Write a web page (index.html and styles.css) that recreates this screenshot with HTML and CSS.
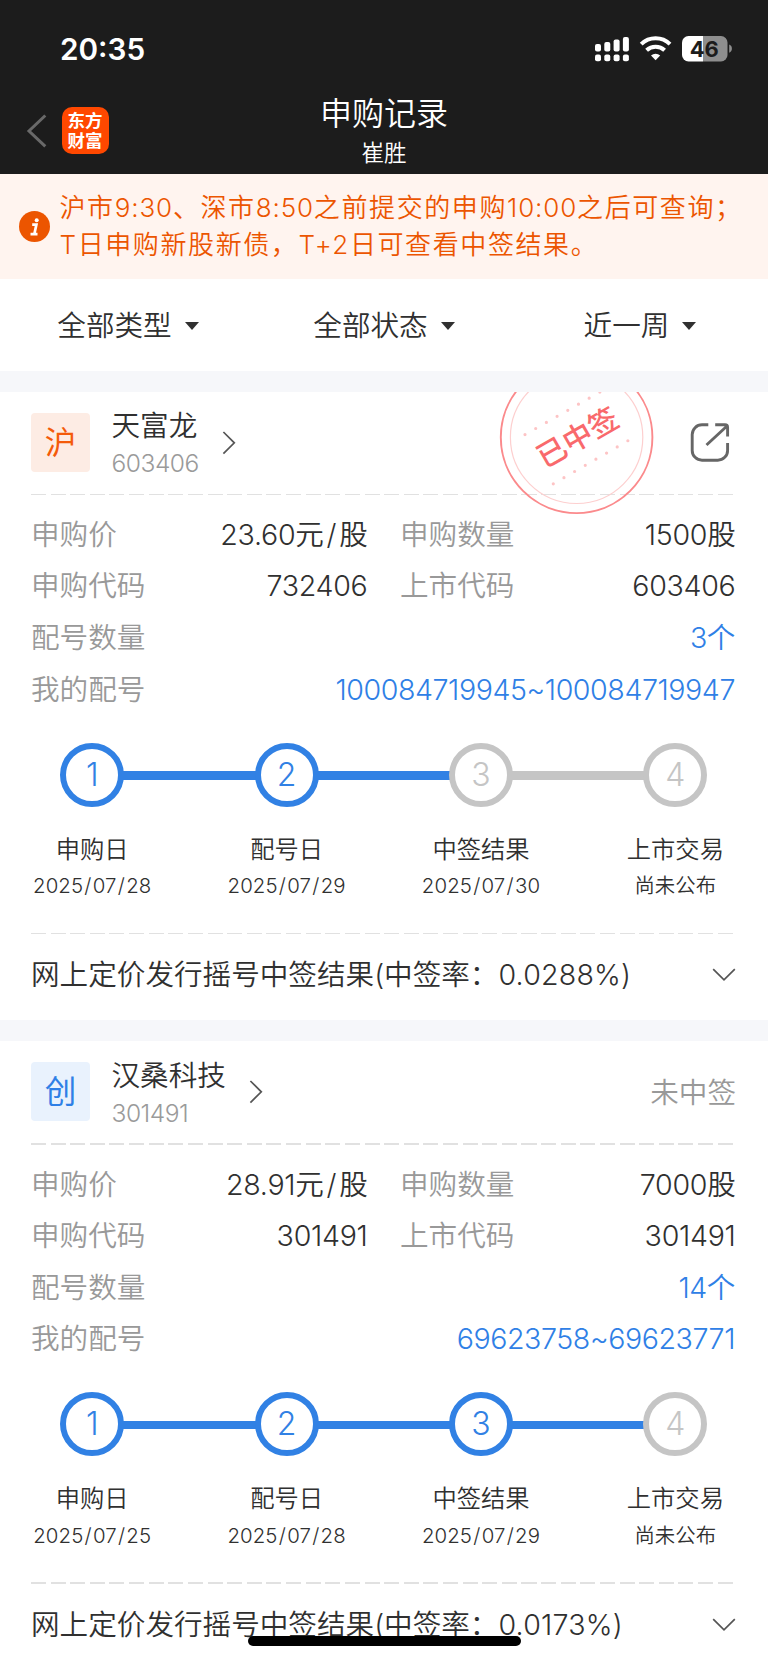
FILE: index.html
```html
<!DOCTYPE html>
<html lang="zh-CN">
<head>
<meta charset="utf-8">
<meta name="viewport" content="width=device-width">
<title>申购记录</title>
<link rel="stylesheet" href="styles.css">
</head>
<body>
<header class="header">
  <div class="status">
    <span class="time">20:35</span>
    <svg class="status-icons" width="140" height="30" viewBox="594 34 140 30">
      <g fill="#fff">
        <rect x="595" y="44" width="6" height="7.4" rx="2"/><rect x="604.3" y="42" width="6" height="9.4" rx="2"/><rect x="613.6" y="39.6" width="6" height="11.8" rx="2"/><rect x="622.9" y="37" width="6" height="14.4" rx="2"/>
        <rect x="595" y="54.6" width="6" height="6.6" rx="2"/><rect x="604.3" y="54.6" width="6" height="6.6" rx="2"/><rect x="613.6" y="54.6" width="6" height="6.6" rx="2"/><rect x="622.9" y="54.6" width="6" height="6.6" rx="2"/>
        <path d="M655.6 60.2l-4.6-4.6a6.6 6.6 0 0 1 9.2 0z"/>
      </g>
      <g fill="none" stroke="#fff" stroke-width="4">
        <path d="M641.2 44.2a20.5 20.5 0 0 1 28.8 0"/>
        <path d="M646.6 50.3a13 13 0 0 1 18 0"/>
      </g>
      <path d="M703 36h18a6.5 6.5 0 0 1 6.5 6.5V55a6.5 6.5 0 0 1-6.5 6.5h-18z" fill="#8e8e8e"/>
      <path d="M703 36h-14.5a6.5 6.5 0 0 0-6.5 6.5V55a6.5 6.5 0 0 0 6.5 6.5H703z" fill="#fff"/>
      <path d="M729.2 44.6c3.6 1.2 3.6 7 0 8.2z" fill="#8e8e8e"/>
      <text class="battery-text" x="704.3" y="56.8" text-anchor="middle">46</text>
    </svg>
  </div>
  <div class="nav">
    <div class="nav-left">
      <svg width="22" height="36" viewBox="26 113 22 36"><path d="M45.3 115.5L29 131l16.3 15.3" fill="none" stroke="#696969" stroke-width="3"/></svg>
      <div class="app-logo"><span>东方</span><span>财富</span></div>
    </div>
    <div class="nav-title"><h1>申购记录</h1><p>崔胜</p></div>
    <div class="nav-right"></div>
  </div>
</header>

<section class="notice">
  <svg width="31" height="31" viewBox="0 0 31 31"><circle cx="15.5" cy="15.5" r="15.5" fill="#ec5500"/><circle cx="17.7" cy="9.2" r="2" fill="#fff"/><path d="M13.2 13.6h4.2l-2 9.2M11.5 23.1h7" fill="none" stroke="#fff" stroke-width="2.7"/></svg>
  <p>沪市<em>9:30</em>、深市<em>8:50</em>之前提交的申购<em>10:00</em>之后可查询；<br>T日申购新股新债，T+2日可查看中签结果。</p>
</section>

<nav class="filters">
  <div class="filter">全部类型<i class="caret"></i></div>
  <div class="filter">全部状态<i class="caret"></i></div>
  <div class="filter">近一周<i class="caret"></i></div>
</nav>

<main>
<article class="card">
  <div class="card-head">
    <span class="badge badge-sh">沪</span>
    <div class="stock"><b>天富龙</b><span>603406</span></div>
    <svg class="arrow" width="14" height="26" viewBox="0 0 14 26"><path d="M1.4 2L12.3 12.8 1.4 23.6" fill="none" stroke="#555" stroke-width="1.7"/></svg>
    <svg class="share" width="42" height="42" viewBox="689 421 42 42"><g fill="none" stroke="#666" stroke-width="2.9"><path d="M709.3 424.8h-6.3a9.8 9.8 0 0 0-9.8 9.8v15.8a9.8 9.8 0 0 0 9.8 9.8h15.8a9.8 9.8 0 0 0 9.8-9.8v-7.4"/><path d="M716.2 424.8h9.8a2.6 2.6 0 0 1 2.6 2.6v9.2M707.5 445l20-18.5"/></g></svg>
    <svg class="stamp" width="156" height="124" viewBox="499 391 156 124">
      <circle cx="576.6" cy="436.3" r="75.8" fill="none" stroke="#fb8a8c" stroke-width="1.9"/>
      <circle cx="576.6" cy="436.3" r="66.2" fill="none" stroke="#fdcfcf" stroke-width="1.2"/>
      <g fill="none" stroke="#fdc4c5" stroke-width="3.2" stroke-linecap="round" stroke-dasharray="0 12.3">
        <path d="M525 433.6L600.5 390.7"/><path d="M553.3 482.8L628.8 439.2"/>
      </g>
      <text class="stamp-text" x="577.6" y="447" text-anchor="middle" transform="rotate(-30 577.6 436.3)">已中签</text>
    </svg>
  </div>
  <div class="dash"></div>
  <dl class="details">
    <div><dt>申购价</dt><dd>23.60元<s>/</s>股</dd></div>
    <div><dt>申购数量</dt><dd>1500股</dd></div>
    <div><dt>申购代码</dt><dd>732406</dd></div>
    <div><dt>上市代码</dt><dd>603406</dd></div>
    <div class="wide"><dt>配号数量</dt><dd class="link">3个</dd></div>
    <div class="wide"><dt>我的配号</dt><dd class="link">100084719945~100084719947</dd></div>
  </dl>
  <ol class="steps">
    <li class="on next-on"><i>1</i><b>申购日</b><span>2025<s>/</s>07<s>/</s>28</span></li>
    <li class="on next-on"><i>2</i><b>配号日</b><span>2025<s>/</s>07<s>/</s>29</span></li>
    <li><i>3</i><b>中签结果</b><span>2025<s>/</s>07<s>/</s>30</span></li>
    <li><i>4</i><b>上市交易</b><span>尚未公布</span></li>
  </ol>
  <div class="dash"></div>
  <div class="result"><span>网上定价发行摇号中签结果(中签率：<em>0.0288%)</em></span>
    <svg width="24" height="14" viewBox="0 0 24 14"><path d="M1.2 1.2L12 11.8 22.8 1.2" fill="none" stroke="#555" stroke-width="1.7"/></svg></div>
</article>

<article class="card">
  <div class="card-head">
    <span class="badge badge-cy">创</span>
    <div class="stock"><b>汉桑科技</b><span>301491</span></div>
    <svg class="arrow" width="14" height="26" viewBox="0 0 14 26"><path d="M1.4 2L12.3 12.8 1.4 23.6" fill="none" stroke="#555" stroke-width="1.7"/></svg>
    <span class="missed">未中签</span>
  </div>
  <div class="dash"></div>
  <dl class="details">
    <div><dt>申购价</dt><dd>28.91元<s>/</s>股</dd></div>
    <div><dt>申购数量</dt><dd>7000股</dd></div>
    <div><dt>申购代码</dt><dd>301491</dd></div>
    <div><dt>上市代码</dt><dd>301491</dd></div>
    <div class="wide"><dt>配号数量</dt><dd class="link">14个</dd></div>
    <div class="wide"><dt>我的配号</dt><dd class="link">69623758~69623771</dd></div>
  </dl>
  <ol class="steps">
    <li class="on next-on"><i>1</i><b>申购日</b><span>2025<s>/</s>07<s>/</s>25</span></li>
    <li class="on next-on"><i>2</i><b>配号日</b><span>2025<s>/</s>07<s>/</s>28</span></li>
    <li class="on next-on"><i>3</i><b>中签结果</b><span>2025<s>/</s>07<s>/</s>29</span></li>
    <li><i>4</i><b>上市交易</b><span>尚未公布</span></li>
  </ol>
  <div class="dash"></div>
  <div class="result"><span>网上定价发行摇号中签结果(中签率：<em>0.0173%)</em></span>
    <svg width="24" height="14" viewBox="0 0 24 14"><path d="M1.2 1.2L12 11.8 22.8 1.2" fill="none" stroke="#555" stroke-width="1.7"/></svg></div>
</article>
</main>
<div class="home-indicator"></div>
</body>
</html>
```
FILE: styles.css
```css
* { box-sizing: border-box; margin: 0; padding: 0; }
html, body { height: 1663px; overflow: hidden; }
body {
  width: 768px;
  background: #f6f7fa;
  color: #303030;
  font-family: Inter, "Noto Sans CJK SC", sans-serif;
  font-size: 28.6px;
  font-weight: 350;
  line-height: 40px;
  white-space: nowrap;
}
i, em { font-style: normal; }
s { text-decoration: none; }
svg { display: block; flex: none; }

/* Header */
.header { height: 173.5px; background: #1c1c1c; color: #fff; }
.status { height: 88px; padding: 0 34px 0 60px; display: flex; justify-content: space-between; align-items: flex-start; }
.time { margin-top: 29px; font-size: 29.7px; font-weight: 600; }
.status-icons { margin-top: 34px; }
.battery-text { font: 700 22px Inter, sans-serif; fill: #1c1c1c; }
.nav { display: grid; grid-template-columns: 1fr auto 1fr; height: 85px; }
.nav-left { display: flex; align-items: flex-start; padding: 19px 0 0 26px; gap: 13.5px; }
.nav-left svg { margin-top: 6px; }
.app-logo {
  width: 47px; height: 47px; border-radius: 10px; background: #ff4800;
  display: flex; flex-direction: column; align-items: center; padding-top: 4px;
  font-size: 17.5px; line-height: 19.5px; font-weight: 700;
}
.nav-title { text-align: center; padding-top: 4px; }
.nav-title h1 { font-size: 32px; line-height: 44px; font-weight: 350; }
.nav-title p { font-size: 22.5px; line-height: 34px; }

/* Notice */
.notice { height: 105.5px; background: #fff4ef; color: #ec5500; display: flex; padding: 15px 0 0 18.5px; gap: 10px; }
.notice svg { margin-top: 22px; }
.notice p { font-size: 26px; line-height: 37.5px; letter-spacing: 1.6px; }
.notice em { letter-spacing: .85px; }

/* Filters */
.filters { height: 92px; background: #fff; display: grid; grid-template-columns: repeat(3, 1fr); }
.filter { display: flex; justify-content: center; align-items: center; gap: 13px; padding-top: 1px; }
.caret { border: 7.5px solid transparent; border-top: 8px solid #303030; border-bottom: 0; }

/* Cards */
.card { margin-top: 20.5px; height: 628.6px; background: #fff; padding: 0 33px 0 31px; }
.card + .card { margin-top: 21.4px; }
.card-head { position: relative; height: 102px; display: flex; align-items: flex-start; padding-top: 21px; }
.badge { width: 59px; height: 59px; border-radius: 4px; text-align: center; font-size: 31.5px; font-weight: 400; line-height: 59px; }
.badge-sh { background: #fdece4; color: #f45b0a; }
.badge-cy { background: #e9f2fd; color: #2f80e6; }
.stock { margin: -6.5px 0 0 21.5px; display: flex; flex-direction: column; }
.stock b { font-weight: 350; line-height: 40px; }
.stock span { color: #9a9a9a; font-size: 24.6px; line-height: 34px; letter-spacing: -.5px; }
.arrow { margin: 17px 0 0 23.5px; }
.share { margin: 8.5px 5px 0 auto; }
.stamp { position: absolute; left: 468px; top: 0; }
.stamp-text { font-size: 29.5px; font-weight: 500; fill: #f9696c; }
.missed { margin: 10.5px -1px 0 auto; color: #999; }
.dash { height: 1.5px; width: 702px; background: repeating-linear-gradient(90deg, #e1e1e1 0 15px, transparent 15px 19.62px); }
.details { display: grid; grid-template-columns: 336px 335px; column-gap: 33px; grid-template-rows: 51px 51px 53px 50px; padding-top: 14.5px; }
.details div { display: flex; justify-content: space-between; align-items: center; }
.details .wide { grid-column: 1 / 3; }
.details dt { color: #999; }
.details dd { letter-spacing: -.3px; margin-right: -.5px; }
.details s { margin: 0 3px; }
.details .link { color: #2f80e6; margin-right: 0; letter-spacing: -.43px; }

/* Progress steps */
.steps { list-style: none; display: grid; grid-template-columns: repeat(4, 194.4px); margin: 28px 0 0 -36px; height: 190px; }
.steps li { display: flex; flex-direction: column; align-items: center; position: relative; }
.steps i { width: 64px; height: 64px; border: 6px solid #c5c5c5; border-radius: 50%; color: #c5c5c5; font-size: 32px; font-weight: 350; line-height: 52px; text-align: center; }
.steps li:not(:last-child)::after { content: ""; position: absolute; left: calc(50% + 31px); right: calc(-50% + 31px); top: 28.5px; height: 8.5px; background: #c5c5c5; }
.steps .next-on:not(:last-child)::after { background: #3181e4; }
.steps .on i { color: #3181e4; border-color: #3181e4; }
.steps b { font-size: 24.3px; font-weight: 350; line-height: 36px; margin-top: 24px; }
.steps span { font-size: 20.4px; line-height: 30px; margin-top: 4.5px; letter-spacing: .1px; }
.steps s { margin: 0 1.2px; }

.result { height: 82px; display: flex; align-items: center; justify-content: space-between; }
.result em { letter-spacing: .2px; }
.result svg { margin-right: -1px; }
.home-indicator { position: fixed; left: 248px; top: 1636px; width: 273px; height: 10px; border-radius: 5px; background: #000; }
```
